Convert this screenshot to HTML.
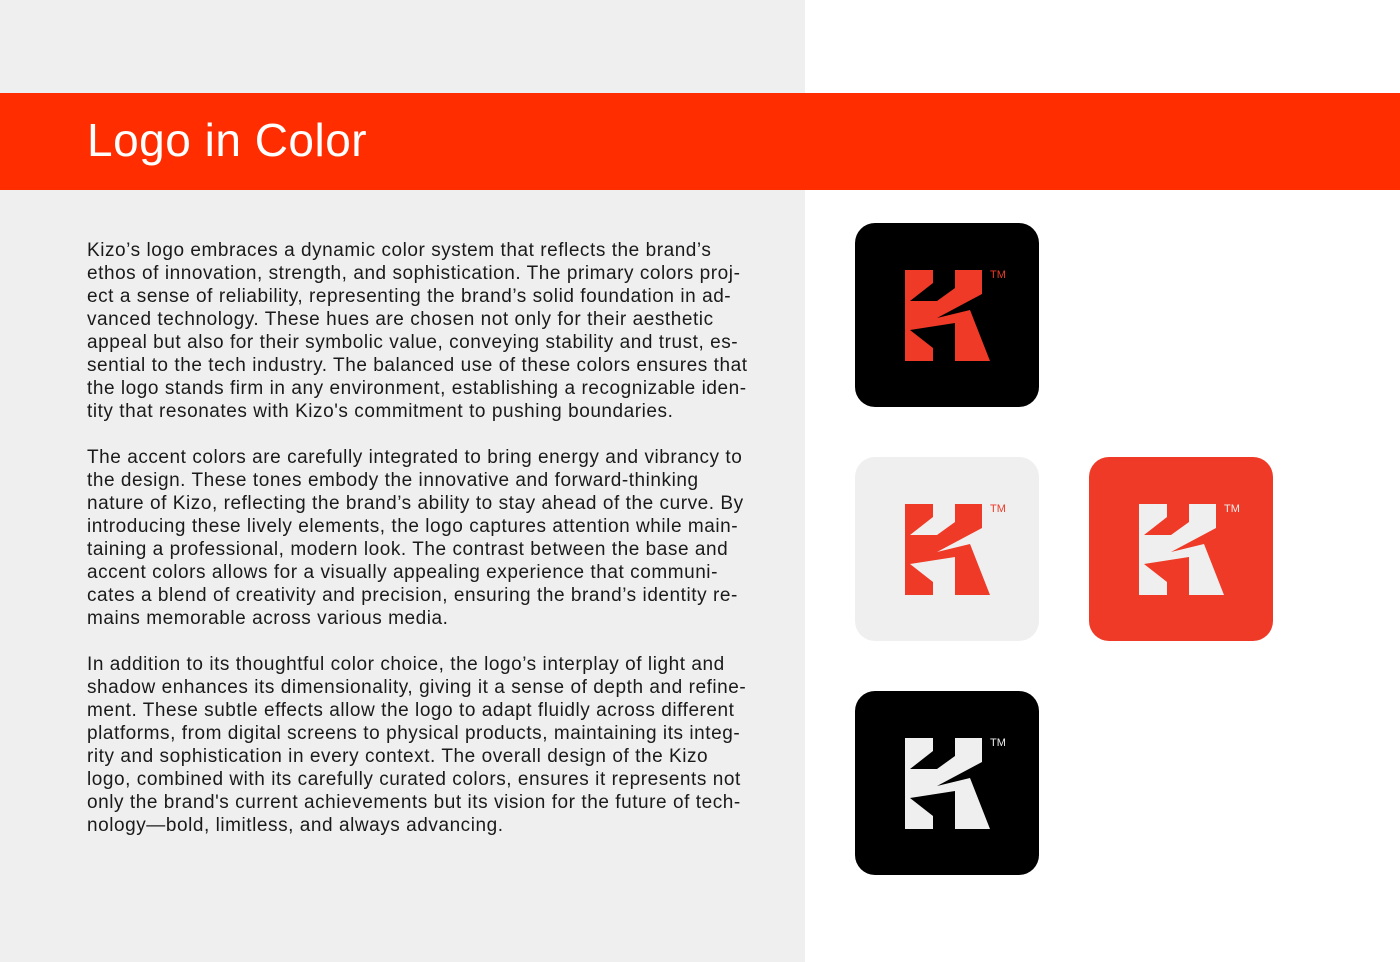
<!DOCTYPE html>
<html><head><meta charset="utf-8"><style>
body{margin:0;width:1400px;height:962px;position:relative;background:#fff;font-family:"Liberation Sans",sans-serif;overflow:hidden}
.left{position:absolute;left:0;top:0;width:805px;height:962px;background:#efefef}
.band{position:absolute;left:0;top:93px;width:1400px;height:97px;background:#ff2d00}
.band h1{margin:0;position:absolute;left:87px;top:20px;color:#fff;font-weight:normal;font-size:46px;letter-spacing:0.5px}
.txt{position:absolute;left:87px;top:239px;width:700px;font-size:19px;line-height:23px;color:#1a1a1a;letter-spacing:0.55px;white-space:nowrap}
.txt p{margin:0 0 23px 0}
.box{position:absolute;width:184px;height:184px;border-radius:20px}
.box svg{position:absolute;left:0;top:0}
</style></head><body>
<div class="left"></div>
<div class="band"><h1>Logo in Color</h1></div>
<div class="txt">
<p>Kizo’s logo embraces a dynamic color system that reflects the brand’s<br>ethos of innovation, strength, and sophistication. The primary colors proj-<br>ect a sense of reliability, representing the brand’s solid foundation in ad-<br>vanced technology. These hues are chosen not only for their aesthetic<br>appeal but also for their symbolic value, conveying stability and trust, es-<br>sential to the tech industry. The balanced use of these colors ensures that<br>the logo stands firm in any environment, establishing a recognizable iden-<br>tity that resonates with Kizo's commitment to pushing boundaries.</p>
<p>The accent colors are carefully integrated to bring energy and vibrancy to<br>the design. These tones embody the innovative and forward-thinking<br>nature of Kizo, reflecting the brand’s ability to stay ahead of the curve. By<br>introducing these lively elements, the logo captures attention while main-<br>taining a professional, modern look. The contrast between the base and<br>accent colors allows for a visually appealing experience that communi-<br>cates a blend of creativity and precision, ensuring the brand’s identity re-<br>mains memorable across various media.</p>
<p>In addition to its thoughtful color choice, the logo’s interplay of light and<br>shadow enhances its dimensionality, giving it a sense of depth and refine-<br>ment. These subtle effects allow the logo to adapt fluidly across different<br>platforms, from digital screens to physical products, maintaining its integ-<br>rity and sophistication in every context. The overall design of the Kizo<br>logo, combined with its carefully curated colors, ensures it represents not<br>only the brand's current achievements but its vision for the future of tech-<br>nology—bold, limitless, and always advancing.</p>
</div>
<div class="box" style="left:855px;top:223px;background:#000"><svg width="184" height="184"><polygon fill="#ee3a26" points="50,47 78,47 78,60 55,78 82,78 100,65 100,47 127,47 127,71 82,95 115,87 135,138 100,138 100,100 55,107 78,125 78,138 50,138"/><text x="135" y="55" fill="#ee3a26" font-size="11" font-family="Liberation Sans">TM</text></svg></div>
<div class="box" style="left:855px;top:457px;background:#efefef"><svg width="184" height="184"><polygon fill="#ee3a26" points="50,47 78,47 78,60 55,78 82,78 100,65 100,47 127,47 127,71 82,95 115,87 135,138 100,138 100,100 55,107 78,125 78,138 50,138"/><text x="135" y="55" fill="#ee3a26" font-size="11" font-family="Liberation Sans">TM</text></svg></div>
<div class="box" style="left:1089px;top:457px;background:#ee3a26"><svg width="184" height="184"><polygon fill="#efefef" points="50,47 78,47 78,60 55,78 82,78 100,65 100,47 127,47 127,71 82,95 115,87 135,138 100,138 100,100 55,107 78,125 78,138 50,138"/><text x="135" y="55" fill="#efefef" font-size="11" font-family="Liberation Sans">TM</text></svg></div>
<div class="box" style="left:855px;top:691px;background:#000"><svg width="184" height="184"><polygon fill="#efefef" points="50,47 78,47 78,60 55,78 82,78 100,65 100,47 127,47 127,71 82,95 115,87 135,138 100,138 100,100 55,107 78,125 78,138 50,138"/><text x="135" y="55" fill="#efefef" font-size="11" font-family="Liberation Sans">TM</text></svg></div>
</body></html>
